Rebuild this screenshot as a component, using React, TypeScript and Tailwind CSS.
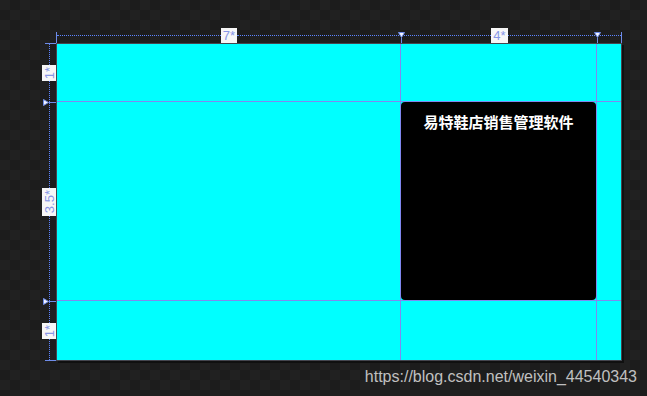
import React from "react";

// designer adorner colours
const tick = "bg-[#6f8ce8]";
const dotsH = "flex-1 border-t border-dotted border-[#5c84ff]";
const dotsV = "flex-1 border-l border-dotted border-[#5c84ff]";
const gridLine = "border-[#8088f0]";

function DownMarker() {
  return (
    <svg width="7" height="6" viewBox="0 0 7 6" className="shrink-0">
      <polygon points="0.5,0.5 6.5,0.5 3.5,5.5" fill="#f4f6ff" stroke="#6f8ce8" strokeWidth="1" />
    </svg>
  );
}

function RightMarker() {
  return (
    <svg width="6" height="7" viewBox="0 0 6 7" className="shrink-0">
      <polygon points="0.5,0.5 0.5,6.5 5.5,3.5" fill="#f4f6ff" stroke="#6f8ce8" strokeWidth="1" />
    </svg>
  );
}

function Label({ text, vertical }: { text: string; vertical?: boolean }) {
  const font = "text-[13px] leading-[15px] text-[#8796e6] font-['Liberation_Sans',sans-serif]";
  if (vertical) {
    return (
      <div className="w-[15px] -mr-px bg-[#f7f7f7] py-[2px] flex items-center justify-center">
        <span className={`[writing-mode:vertical-rl] rotate-180 ${font}`}>{text}</span>
      </div>
    );
  }
  return <div className={`h-[15px] bg-[#f7f7f7] px-[2px] flex items-center ${font}`}>{text}</div>;
}

// column boundary on the top ruler: marker + line running down to the canvas
function ColBoundary() {
  return (
    <div className="-mx-[3px] w-[7px] self-stretch flex flex-col items-center pt-[4px] relative z-10">
      <DownMarker />
      <div className={`w-px flex-1 ${tick}`} />
    </div>
  );
}

// row boundary on the left ruler: marker + line running right to the canvas
function RowBoundary() {
  return (
    <div className="-my-[3px] h-[7px] self-stretch flex items-center pl-px relative z-10">
      <RightMarker />
      <div className={`h-px flex-1 ${tick}`} />
    </div>
  );
}

export default function App() {
  return (
    <div className="w-[647px] h-[396px] overflow-hidden flex flex-col bg-[#1e1e1e] bg-[repeating-conic-gradient(#1c1c1c_0%_25%,#212121_0%_50%)] bg-[length:20px_20px]">
      <div className="ml-[42px] mt-[28px] grid grid-cols-[14px_566px] grid-rows-[15px_318px]">
        <div />

        {/* column ruler */}
        <div className="px-px grid grid-cols-[344px_196px_1fr]">
          <div className="flex items-center">
            <div className={`-ml-px w-px self-end h-[11px] ${tick}`} />
            <div className={dotsH} />
            <Label text="7*" />
            <div className={dotsH} />
          </div>
          <div className="flex items-center">
            <ColBoundary />
            <div className={dotsH} />
            <Label text="4*" />
            <div className={dotsH} />
          </div>
          <div className="flex items-center">
            <ColBoundary />
            <div className={dotsH} />
            <div className={`-mr-px w-px self-end h-[11px] ${tick}`} />
          </div>
        </div>

        {/* row ruler */}
        <div className="py-px grid grid-rows-[58px_199px_1fr]">
          <div className="flex flex-col items-center">
            <div className={`-mt-px ml-[3px] h-px self-stretch ${tick}`} />
            <div className={dotsV} />
            <Label text="1*" vertical />
            <div className={dotsV} />
          </div>
          <div className="flex flex-col items-center">
            <RowBoundary />
            <div className={dotsV} />
            <Label text="3.5*" vertical />
            <div className={dotsV} />
          </div>
          <div className="flex flex-col items-center">
            <RowBoundary />
            <div className={dotsV} />
            <Label text="1*" vertical />
            <div className={dotsV} />
            <div className={`-mb-px ml-[3px] h-px self-stretch ${tick}`} />
          </div>
        </div>

        {/* canvas */}
        <div className="border border-[#45464f] shadow-[2px_2px_0_#101010] bg-[#00ffff] grid grid-cols-[344px_196px_1fr] grid-rows-[58px_199px_1fr]">
          <div className={`border-r border-b ${gridLine}`} />
          <div className={`border-r border-b ${gridLine}`} />
          <div className={`border-b ${gridLine}`} />

          <div className={`border-r border-b ${gridLine}`} />
          <div className={`border-r border-b ${gridLine} bg-[#00ffff]`}>
            <div className="h-full bg-black rounded-[4px] pt-[10px] text-center text-white text-[15px] leading-[20px] font-bold font-['Noto_Sans_CJK_SC',sans-serif]">
              易特鞋店销售管理软件
            </div>
          </div>
          <div className={`border-b ${gridLine}`} />

          <div className={`border-r ${gridLine}`} />
          <div className={`border-r ${gridLine}`} />
          <div />
        </div>
      </div>

      <div className="mt-[6px] pr-[10px] text-right text-[16px] leading-[20px] text-[#c0c0c0] font-['Liberation_Sans',sans-serif]">
        https://blog.csdn.net/weixin_44540343
      </div>
    </div>
  );
}
